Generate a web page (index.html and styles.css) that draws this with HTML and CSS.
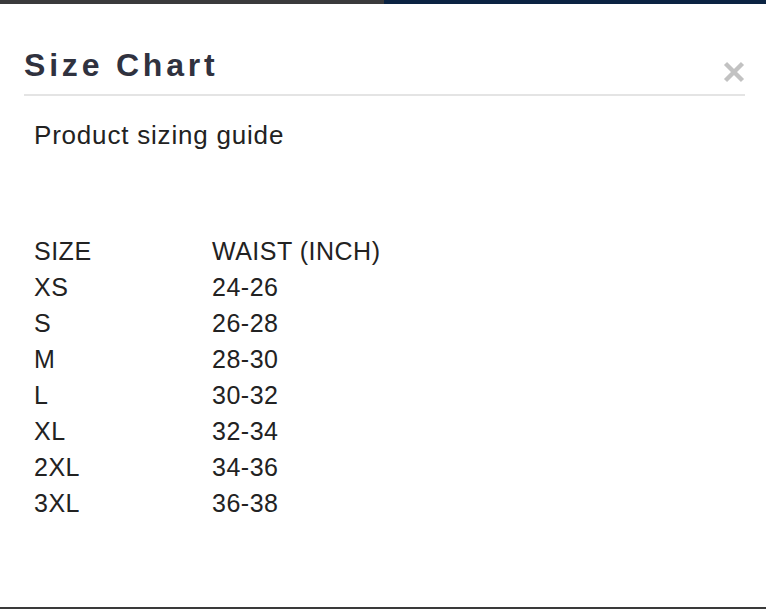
FILE: index.html
```html
<!DOCTYPE html>
<html>
<head>
<meta charset="utf-8">
<link rel="stylesheet" href="styles.css">
</head>
<body>
<div class="topbar"><div class="tb-left"></div><div class="tb-right"></div></div>
<div class="modal">
  <div class="header">
    <h2 class="title">Size Chart</h2>
    <span class="close" aria-label="Close">
      <svg width="22" height="22" viewBox="0 0 22 22"><path d="M2.5 2.5 L19.5 19.5 M19.5 2.5 L2.5 19.5" stroke="#c2c2c2" stroke-width="4.4" stroke-linecap="butt"/></svg>
    </span>
  </div>
  <div class="body">
    <p class="subtitle">Product sizing guide</p>
    <table class="chart">
      <tr><td class="c1">SIZE</td><td>WAIST (INCH)</td></tr>
      <tr><td class="c1">XS</td><td>24-26</td></tr>
      <tr><td class="c1">S</td><td>26-28</td></tr>
      <tr><td class="c1">M</td><td>28-30</td></tr>
      <tr><td class="c1">L</td><td>30-32</td></tr>
      <tr><td class="c1">XL</td><td>32-34</td></tr>
      <tr><td class="c1">2XL</td><td>34-36</td></tr>
      <tr><td class="c1">3XL</td><td>36-38</td></tr>
    </table>
  </div>
</div>
<div class="bottombar"></div>
</body>
</html>
```
FILE: styles.css
```css
html, body {
  margin: 0;
  padding: 0;
  background: #fff;
  height: 609px;
  overflow: hidden;
}
body {
  font-family: "Liberation Sans", Arial, sans-serif;
  display: flex;
  flex-direction: column;
}
.topbar {
  display: flex;
  height: 4px;
}
.tb-left { width: 384px; background: #3a3a3c; }
.tb-right { flex: 1; background: #0b2342; }
.modal {
  flex: 1;
  padding: 41px 21px 0 24px;
}
.header {
  display: flex;
  justify-content: space-between;
  align-items: flex-end;
  border-bottom: 2px solid #e4e4e4;
  padding-bottom: 9px;
}
.title {
  margin: 0;
  font-size: 32px;
  line-height: 40px;
  font-weight: bold;
  letter-spacing: 3.8px;
  color: #30323f;
}
.close {
  display: flex;
  margin-bottom: 2px;
}
.body {
  padding-left: 10px;
}
.subtitle {
  margin: 23px 0 0 0;
  font-size: 26px;
  line-height: 32px;
  letter-spacing: 0.8px;
  color: #222;
}
.chart {
  margin-top: 82px;
  border-collapse: collapse;
  font-size: 25px;
  letter-spacing: 0.5px;
  color: #222;
}
.chart td {
  padding: 0;
  height: 36px;
  line-height: 36px;
  vertical-align: top;
}
.chart td.c1 {
  width: 178px;
}
.bottombar {
  height: 2px;
  background: #3a3a3a;
}
```
